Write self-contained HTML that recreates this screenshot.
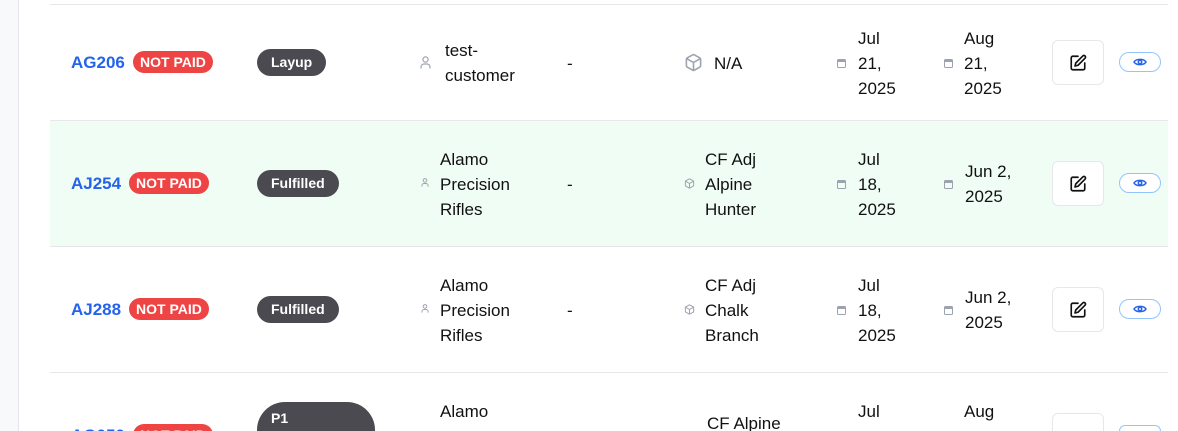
<!DOCTYPE html>
<html style="width:1178px;height:431px;overflow:hidden"><head><style>
*{margin:0;padding:0;box-sizing:border-box}
body{width:1178px;height:431px;overflow:hidden;background:#fff;font-family:"Liberation Sans",sans-serif;color:#111;position:relative}
.side{position:absolute;left:0;top:0;width:19px;height:431px;background:#f8f9fb;border-right:1px solid #e5e7eb}
.hl{position:absolute;left:50px;width:1118px;height:1px;background:#e5e7eb}
.a{position:absolute}
.t{font-size:17px;line-height:25px;color:#111}
.id{font-size:17px;font-weight:bold;color:#2563eb}
.np{background:#ef4444;color:#fff;font-weight:bold;font-size:14px;border-radius:11px;height:22px;line-height:22px;padding:0 7px}
.st{background:#4b4a50;color:#fff;font-weight:bold;font-size:14px;border-radius:14px;height:27px;line-height:27px;padding:0 14px}
.ed{width:52px;height:45px;border:1px solid #e5e7eb;border-radius:6px;background:#fff;display:flex;align-items:center;justify-content:center}
.ey{width:42px;height:20px;border:1px solid #93c5fd;border-radius:10px;background:#fff;display:flex;align-items:center;justify-content:center}
</style></head><body>
<div class="side"></div>
<div class="a" style="left:50px;top:121px;width:1118px;height:125px;background:#f0fdf4"></div>
<div class="hl" style="top:4px"></div>
<div class="hl" style="top:120px"></div>
<div class="hl" style="top:246px"></div>
<div class="hl" style="top:372px"></div>

<!-- Row 1 -->
<div class="a id" style="left:71px;top:53px">AG206</div>
<div class="a np" style="left:133px;top:51px">NOT PAID</div>
<div class="a st" style="left:257px;top:49px">Layup</div>
<svg class="a" style="left:420px;top:56px" width="11" height="13" viewBox="0 0 11 13" fill="none" stroke="#9ca3af" stroke-width="1.2"><circle cx="5.5" cy="3.5" r="2.6"/><path d="M1 12.5v-1.5a3 3 0 0 1 3-3h3a3 3 0 0 1 3 3v1.5"/></svg>
<div class="a t" style="left:445px;top:38px">test-<br>customer</div>
<div class="a t" style="left:567px;top:51px">-</div>
<svg class="a" style="left:684px;top:53px" width="19" height="19" viewBox="0 0 24 24" fill="none" stroke="#9ca3af" stroke-width="2" stroke-linejoin="round"><path d="M21 8a2 2 0 0 0-1-1.73l-7-4a2 2 0 0 0-2 0l-7 4A2 2 0 0 0 3 8v8a2 2 0 0 0 1 1.73l7 4a2 2 0 0 0 2 0l7-4A2 2 0 0 0 21 16Z"/><path d="M3.3 7 12 12l8.7-5M12 22V12"/></svg>
<div class="a t" style="left:714px;top:51px">N/A</div>
<svg class="a" style="left:837px;top:58px" width="9" height="10" viewBox="0 0 9 10"><rect x="0.5" y="1.5" width="8" height="8" rx="1" fill="none" stroke="#9ca3af"/><rect x="0.5" y="1.5" width="8" height="2.5" fill="#9ca3af"/></svg>
<div class="a t" style="left:858px;top:26px">Jul<br>21,<br>2025</div>
<svg class="a" style="left:944px;top:58px" width="9" height="10" viewBox="0 0 9 10"><rect x="0.5" y="1.5" width="8" height="8" rx="1" fill="none" stroke="#9ca3af"/><rect x="0.5" y="1.5" width="8" height="2.5" fill="#9ca3af"/></svg>
<div class="a t" style="left:964px;top:26px">Aug<br>21,<br>2025</div>
<div class="a ed" style="left:1052px;top:40px"><svg width="18" height="18" viewBox="0 0 24 24" fill="none" stroke="#111" stroke-width="2.2" stroke-linecap="round" stroke-linejoin="round"><path d="M12 3H5a2 2 0 0 0-2 2v14a2 2 0 0 0 2 2h14a2 2 0 0 0 2-2v-7"/><path d="M18.4 2.6a2.1 2.1 0 0 1 3 3L12 15l-4 1 1-4Z"/></svg></div>
<div class="a ey" style="left:1119px;top:52px"><svg width="14" height="10" viewBox="0 0 14 10" fill="none" stroke="#2563eb" stroke-width="1.5"><path d="M1 5C3 1.5 11 1.5 13 5C11 8.5 3 8.5 1 5Z"/><circle cx="7" cy="5" r="1.7"/></svg></div>

<!-- Row 2 -->
<div class="a id" style="left:71px;top:174px">AJ254</div>
<div class="a np" style="left:129px;top:172px">NOT PAID</div>
<div class="a st" style="left:257px;top:170px">Fulfilled</div>
<svg class="a" style="left:421px;top:178px" width="8" height="9" viewBox="0 0 11 13" fill="none" stroke="#9ca3af" stroke-width="1.4"><circle cx="5.5" cy="3.5" r="2.6"/><path d="M1 12.5v-1.5a3 3 0 0 1 3-3h3a3 3 0 0 1 3 3v1.5"/></svg>
<div class="a t" style="left:440px;top:147px">Alamo<br>Precision<br>Rifles</div>
<div class="a t" style="left:567px;top:172px">-</div>
<svg class="a" style="left:684px;top:178px" width="11" height="11" viewBox="0 0 24 24" fill="none" stroke="#9ca3af" stroke-width="2.2" stroke-linejoin="round"><path d="M21 8a2 2 0 0 0-1-1.73l-7-4a2 2 0 0 0-2 0l-7 4A2 2 0 0 0 3 8v8a2 2 0 0 0 1 1.73l7 4a2 2 0 0 0 2 0l7-4A2 2 0 0 0 21 16Z"/><path d="M3.3 7 12 12l8.7-5M12 22V12"/></svg>
<div class="a t" style="left:705px;top:147px">CF Adj<br>Alpine<br>Hunter</div>
<svg class="a" style="left:837px;top:179px" width="9" height="10" viewBox="0 0 9 10"><rect x="0.5" y="1.5" width="8" height="8" rx="1" fill="none" stroke="#9ca3af"/><rect x="0.5" y="1.5" width="8" height="2.5" fill="#9ca3af"/></svg>
<div class="a t" style="left:858px;top:147px">Jul<br>18,<br>2025</div>
<svg class="a" style="left:944px;top:179px" width="9" height="10" viewBox="0 0 9 10"><rect x="0.5" y="1.5" width="8" height="8" rx="1" fill="none" stroke="#9ca3af"/><rect x="0.5" y="1.5" width="8" height="2.5" fill="#9ca3af"/></svg>
<div class="a t" style="left:965px;top:159px">Jun 2,<br>2025</div>
<div class="a ed" style="left:1052px;top:161px"><svg width="18" height="18" viewBox="0 0 24 24" fill="none" stroke="#111" stroke-width="2.2" stroke-linecap="round" stroke-linejoin="round"><path d="M12 3H5a2 2 0 0 0-2 2v14a2 2 0 0 0 2 2h14a2 2 0 0 0 2-2v-7"/><path d="M18.4 2.6a2.1 2.1 0 0 1 3 3L12 15l-4 1 1-4Z"/></svg></div>
<div class="a ey" style="left:1119px;top:173px"><svg width="14" height="10" viewBox="0 0 14 10" fill="none" stroke="#2563eb" stroke-width="1.5"><path d="M1 5C3 1.5 11 1.5 13 5C11 8.5 3 8.5 1 5Z"/><circle cx="7" cy="5" r="1.7"/></svg></div>

<!-- Row 3 -->
<div class="a id" style="left:71px;top:300px">AJ288</div>
<div class="a np" style="left:129px;top:298px">NOT PAID</div>
<div class="a st" style="left:257px;top:296px">Fulfilled</div>
<svg class="a" style="left:421px;top:304px" width="8" height="9" viewBox="0 0 11 13" fill="none" stroke="#9ca3af" stroke-width="1.4"><circle cx="5.5" cy="3.5" r="2.6"/><path d="M1 12.5v-1.5a3 3 0 0 1 3-3h3a3 3 0 0 1 3 3v1.5"/></svg>
<div class="a t" style="left:440px;top:273px">Alamo<br>Precision<br>Rifles</div>
<div class="a t" style="left:567px;top:298px">-</div>
<svg class="a" style="left:684px;top:304px" width="11" height="11" viewBox="0 0 24 24" fill="none" stroke="#9ca3af" stroke-width="2.2" stroke-linejoin="round"><path d="M21 8a2 2 0 0 0-1-1.73l-7-4a2 2 0 0 0-2 0l-7 4A2 2 0 0 0 3 8v8a2 2 0 0 0 1 1.73l7 4a2 2 0 0 0 2 0l7-4A2 2 0 0 0 21 16Z"/><path d="M3.3 7 12 12l8.7-5M12 22V12"/></svg>
<div class="a t" style="left:705px;top:273px">CF Adj<br>Chalk<br>Branch</div>
<svg class="a" style="left:837px;top:305px" width="9" height="10" viewBox="0 0 9 10"><rect x="0.5" y="1.5" width="8" height="8" rx="1" fill="none" stroke="#9ca3af"/><rect x="0.5" y="1.5" width="8" height="2.5" fill="#9ca3af"/></svg>
<div class="a t" style="left:858px;top:273px">Jul<br>18,<br>2025</div>
<svg class="a" style="left:944px;top:305px" width="9" height="10" viewBox="0 0 9 10"><rect x="0.5" y="1.5" width="8" height="8" rx="1" fill="none" stroke="#9ca3af"/><rect x="0.5" y="1.5" width="8" height="2.5" fill="#9ca3af"/></svg>
<div class="a t" style="left:965px;top:285px">Jun 2,<br>2025</div>
<div class="a ed" style="left:1052px;top:287px"><svg width="18" height="18" viewBox="0 0 24 24" fill="none" stroke="#111" stroke-width="2.2" stroke-linecap="round" stroke-linejoin="round"><path d="M12 3H5a2 2 0 0 0-2 2v14a2 2 0 0 0 2 2h14a2 2 0 0 0 2-2v-7"/><path d="M18.4 2.6a2.1 2.1 0 0 1 3 3L12 15l-4 1 1-4Z"/></svg></div>
<div class="a ey" style="left:1119px;top:299px"><svg width="14" height="10" viewBox="0 0 14 10" fill="none" stroke="#2563eb" stroke-width="1.5"><path d="M1 5C3 1.5 11 1.5 13 5C11 8.5 3 8.5 1 5Z"/><circle cx="7" cy="5" r="1.7"/></svg></div>

<!-- Row 4 partial -->
<div class="a id" style="left:71px;top:426px">AG050</div>
<div class="a np" style="left:133px;top:424px">NOT PAID</div>
<div class="a" style="left:257px;top:402px;width:118px;height:29px;overflow:hidden;border-radius:28px 28px 0 0;background:#4b4a50;color:#fff;font-weight:bold;font-size:14px;padding:5px 14px;line-height:22px">P1<br>Production</div>
<div class="a t" style="left:440px;top:399px">Alamo</div>
<div class="a t" style="left:707px;top:411px">CF Alpine</div>
<div class="a t" style="left:858px;top:399px">Jul</div>
<div class="a t" style="left:964px;top:399px">Aug</div>
<div class="a" style="left:1052px;top:413px;width:52px;height:18px;border:1px solid #e5e7eb;border-bottom:none;border-radius:6px 6px 0 0"></div>
<div class="a" style="left:1119px;top:425px;width:42px;height:6px;border:1px solid #93c5fd;border-bottom:none;border-radius:10px 10px 0 0"></div>
</body></html>
